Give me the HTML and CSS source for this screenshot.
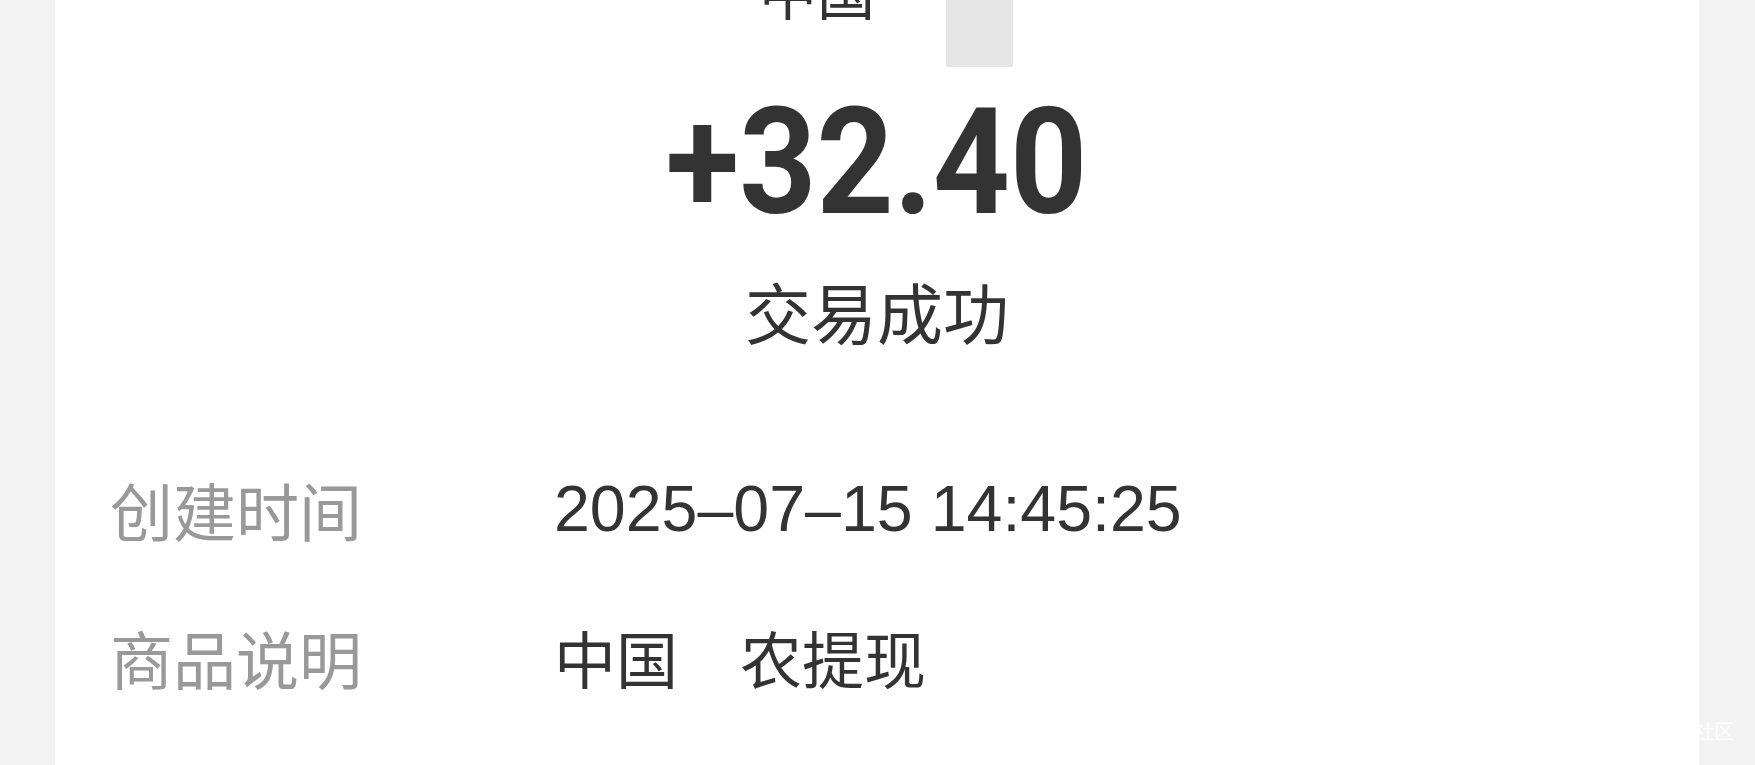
FILE: index.html
```html
<!DOCTYPE html>
<html lang="zh-CN">
<head>
<meta charset="utf-8">
<title>交易详情</title>
<link rel="stylesheet" href="styles.css">
</head>
<body>
<main class="card">
  <div class="head">
    <span class="head-name">中国</span>
    <span class="head-block"></span>
  </div>
  <div class="amount"><span class="amount-text">+32.40</span></div>
  <div class="status">交易成功</div>
  <dl class="rows">
    <div class="row">
      <dt class="label">创建时间</dt>
      <dd class="value num">2025–07–15 14:45:25</dd>
    </div>
    <div class="row">
      <dt class="label">商品说明</dt>
      <dd class="value cjk">中国　农提现</dd>
    </div>
  </dl>
</main>
<div class="watermark">社区</div>
</body>
</html>
```

FILE: styles.css
```css
html, body {
  margin: 0;
  padding: 0;
  height: 100%;
  overflow: hidden;
}
body {
  background: #f3f3f3;
  font-family: "Noto Sans CJK SC", "Noto Sans", sans-serif;
  color: #333;
}
.card {
  margin: 0 56px 0 55px;
  height: 765px;
  background: #fff;
  padding: 0 55px;
  box-sizing: border-box;
  overflow: hidden;
}
.head {
  display: flex;
  justify-content: center;
  align-items: flex-start;
  height: 67px;
  margin-left: 18px;
}
.head-name {
  font-size: 58px;
  line-height: 58px;
  margin-top: -39px;
  color: #333;
}
.head-block {
  width: 67px;
  height: 67px;
  margin-left: 71px;
  background: #e6e6e6;
}
.amount {
  margin-top: 22px;
  text-align: center;
  font-family: Roboto, "Liberation Sans", sans-serif;
  font-weight: 700;
  font-size: 148px;
  line-height: 148px;
  height: 148px;
  color: #333;
}
.amount-text {
  display: inline-block;
  transform: scaleX(0.91);
}
.status {
  margin-top: 40px;
  text-align: center;
  font-size: 66px;
  line-height: 66px;
  color: #333;
}
.rows {
  margin: 134px 0 0 0;
  padding: 0;
}
.row {
  display: flex;
  align-items: center;
  height: 64px;
  margin-bottom: 84px;
}
.label {
  width: 444px;
  flex: none;
  font-size: 63px;
  line-height: 64px;
  color: #999;
}
.value {
  margin: 0;
  font-size: 64.5px;
  line-height: 64px;
  color: #333;
  white-space: pre;
}
.value.cjk {
  font-size: 62px;
}
.num {
  font-family: "Liberation Sans", "Noto Sans CJK SC", sans-serif;
}
.watermark {
  position: absolute;
  left: 1694px;
  top: 719px;
  font-size: 20px;
  line-height: 24px;
  color: rgba(255, 255, 255, 0.9);
}
```
